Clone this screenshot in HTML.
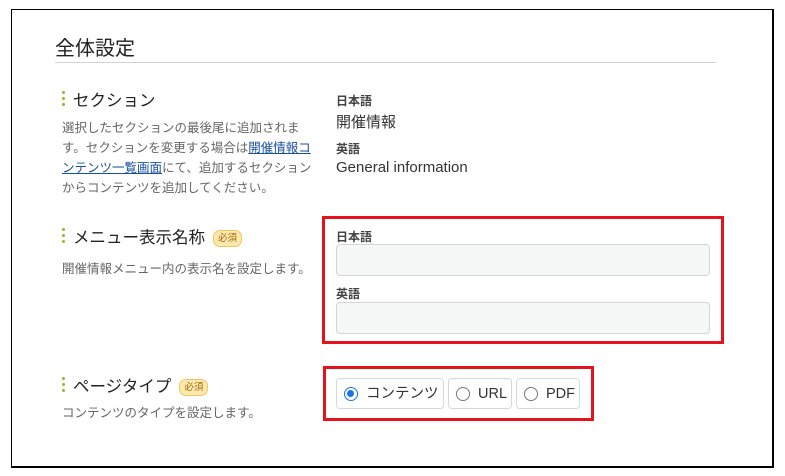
<!DOCTYPE html>
<html><head><meta charset="utf-8"><style>
body{margin:0;width:785px;height:476px;background:#fff;font-family:"Liberation Sans","Noto Sans CJK JP",sans-serif;color:#222;position:relative;overflow:hidden}
.a{position:absolute;white-space:nowrap}
.frame{position:absolute;left:11px;top:9px;width:760px;height:456px;border:1px solid #000;border-right-width:2px;border-bottom-width:2px}
.h{left:55px;top:35px;font-size:20px;color:#222;line-height:28px}
.hl{left:55px;top:62px;width:661px;height:1px;background:#cdd5da}
.dots{position:absolute;width:3px}
.dots i{display:block;width:3px;height:3px;border-radius:50%;background:#9ab52a;margin-bottom:3px}
.t{font-size:16.5px;color:#222;line-height:24px}
.d{font-size:12.5px;color:#666;line-height:20px}
.d a{color:#1a4fa0;text-decoration:underline}
.lb{font-size:12px;font-weight:bold;color:#444}
.v{font-size:15px;color:#333}
.badge{display:inline-block;font-size:9.5px;color:#a06a00;background:#fde9b0;border:1px solid #f1c659;border-radius:7px;padding:1px 4px;vertical-align:2px;margin-left:8px;line-height:13px}
.inp{position:absolute;left:336px;width:372px;height:30px;background:#f6f7f7;border:1px solid #d2d5d7;border-radius:4px}
.red{position:absolute;border:3px solid #e4141e}
.btn{position:absolute;top:378px;height:31px;border:1px solid #d6d9db;border-radius:4px;font-size:14.5px;color:#333;line-height:30px;box-sizing:border-box}
.rad{position:absolute;top:8px;left:7px;width:14px;height:14px;border:1px solid #777;border-radius:50%;box-sizing:border-box}
.rad.on{border:1.5px solid #1a73e8}
.rad.on::after{content:"";position:absolute;left:2px;top:2px;width:7px;height:7px;border-radius:50%;background:#1a73e8}
</style></head><body>
<div class="frame"></div>
<div class="a h">全体設定</div>
<div class="a hl"></div>

<div class="dots" style="left:62px;top:91px"><i></i><i></i><i></i></div>
<div class="a t" style="left:73px;top:89px">セクション</div>
<div class="a d" style="left:62px;top:118px">選択したセクションの最後尾に追加されま<br>す。セクションを変更する場合は<a>開催情報コ</a><br><a>ンテンツ一覧画面</a>にて、追加するセクション<br>からコンテンツを追加してください。</div>
<div class="a lb" style="left:336px;top:92px">日本語</div>
<div class="a v" style="left:336px;top:111px">開催情報</div>
<div class="a lb" style="left:336px;top:140px">英語</div>
<div class="a v" style="left:336px;top:159px">General information</div>

<div class="dots" style="left:62px;top:228px"><i></i><i></i><i></i></div>
<div class="a t" style="left:73px;top:226px">メニュー表示名称<span class="badge">必須</span></div>
<div class="a d" style="left:62px;top:259px">開催情報メニュー内の表示名を設定します。</div>
<div class="red" style="left:322px;top:216px;width:396px;height:122px"></div>
<div class="a lb" style="left:336px;top:228px">日本語</div>
<div class="inp" style="top:244px"></div>
<div class="a lb" style="left:336px;top:285px">英語</div>
<div class="inp" style="top:302px"></div>

<div class="dots" style="left:62px;top:377px"><i></i><i></i><i></i></div>
<div class="a t" style="left:73px;top:375px">ページタイプ<span class="badge">必須</span></div>
<div class="a d" style="left:62px;top:403px">コンテンツのタイプを設定します。</div>
<div class="red" style="left:323px;top:366px;width:265px;height:49px"></div>
<div class="btn" style="left:336px;width:108px"><span class="rad on"></span><span style="position:absolute;left:29px">コンテンツ</span></div>
<div class="btn" style="left:448px;width:64px"><span class="rad"></span><span style="position:absolute;left:29px">URL</span></div>
<div class="btn" style="left:516px;width:64px"><span class="rad"></span><span style="position:absolute;left:29px">PDF</span></div>
</body></html>
